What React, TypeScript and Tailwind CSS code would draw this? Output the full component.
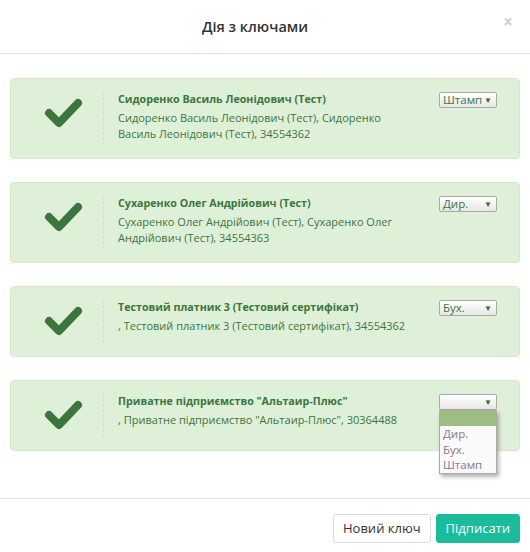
const keys = [
  {
    name: "Сидоренко Василь Леонідович (Тест)",
    desc: "Сидоренко Василь Леонідович (Тест), Сидоренко Василь Леонідович (Тест), 34554362",
    role: "Штамп",
  },
  {
    name: "Сухаренко Олег Андрійович (Тест)",
    desc: "Сухаренко Олег Андрійович (Тест), Сухаренко Олег Андрійович (Тест), 34554363",
    role: "Дир.",
  },
  {
    name: "Тестовий платник 3 (Тестовий сертифікат)",
    desc: ", Тестовий платник 3 (Тестовий сертифікат), 34554362",
    role: "Бух.",
  },
  {
    name: "Приватне підприємство \"Альтаир-Плюс\"",
    desc: ", Приватне підприємство \"Альтаир-Плюс\", 30364488",
    role: "",
    open: true,
  },
];

function Check() {
  return (
    <svg width="40" height="34" viewBox="0 0 40 34" className="block">
      <path
        d="M6 18 L16 28 L35 8"
        fill="none"
        stroke="#3c763d"
        strokeWidth="8"
        strokeLinecap="round"
        strokeLinejoin="round"
      />
    </svg>
  );
}

function RoleSelect({ value, open }: { value: string; open?: boolean }) {
  return (
    <div className="relative w-[58px] shrink-0">
      <div className="flex h-[16px] items-center justify-between rounded-[2px] border border-[#a9a9a9] bg-gradient-to-b from-white to-[#e6e6e6] pl-[3px] pr-[4px] text-[11.5px] leading-[14px] text-[#3c763d]">
        <span>{value}</span>
        <span className="text-[8px] leading-none text-[#2f6b32]">▼</span>
      </div>
      {open && (
        <div className="absolute left-0 top-[16px] z-10 w-[58px] border border-[#a9a9a9] bg-[#fafafa] text-[11.5px] leading-[15.5px] text-[#8a7888] shadow-[2px_3px_4px_rgba(0,0,0,0.3)]">
          <div className="h-[15px] bg-[#9dbd82]" />
          <div className="px-[3px]">Дир.</div>
          <div className="px-[3px]">Бух.</div>
          <div className="px-[3px]">Штамп</div>
        </div>
      )}
    </div>
  );
}

export default function App() {
  return (
    <div className="w-[530px] h-[552px] bg-white font-['Open_Sans',sans-serif] text-[#333]">
      {/* header */}
      <div className="relative flex h-[54px] items-center justify-center border-b border-[#e5e5e5] pr-[20px]">
        <h4 className="text-[14.5px] font-semibold text-[#333]">Дія з ключами</h4>
        <span className="absolute right-[17px] top-[9px] text-[17px] font-bold text-[#cfcfcf]">×</span>
      </div>

      {/* body */}
      <div className="flex h-[444px] flex-col gap-[23px] px-[10px] pt-[24px]">
        {keys.map((k) => (
          <div
            key={k.name}
            className="flex rounded-[4px] border border-[#d6e9c6] bg-[#dff0d8] py-[13px] pr-[22px] text-[#3c763d]"
          >
            <div className="flex min-h-[43px] w-[93px] shrink-0 border-r border-dashed border-[#d3dccb] pl-[32px] pt-[3px]">
              <Check />
            </div>
            <div className="w-[310px] pb-[3px] pl-[14px]">
              <div className="text-[10.7px] font-bold leading-[15px]">{k.name}</div>
              <div className="mt-[3px] text-[11px] leading-[16px]">{k.desc}</div>
            </div>
            <div className="ml-auto">
              <RoleSelect value={k.role} open={k.open} />
            </div>
          </div>
        ))}
      </div>

      {/* footer */}
      <div className="flex justify-end gap-[5px] border-t border-[#e5e5e5] px-[10px] pt-[15px]">
        <button className="h-[29px] rounded-[3px] border border-[#dcdcdc] bg-white px-[9px] text-[13px] text-[#333]">
          Новий ключ
        </button>
        <button className="h-[29px] rounded-[3px] border border-[#1abc9c] bg-[#1abc9c] px-[9px] text-[13px] text-white">
          Підписати
        </button>
      </div>
    </div>
  );
}
